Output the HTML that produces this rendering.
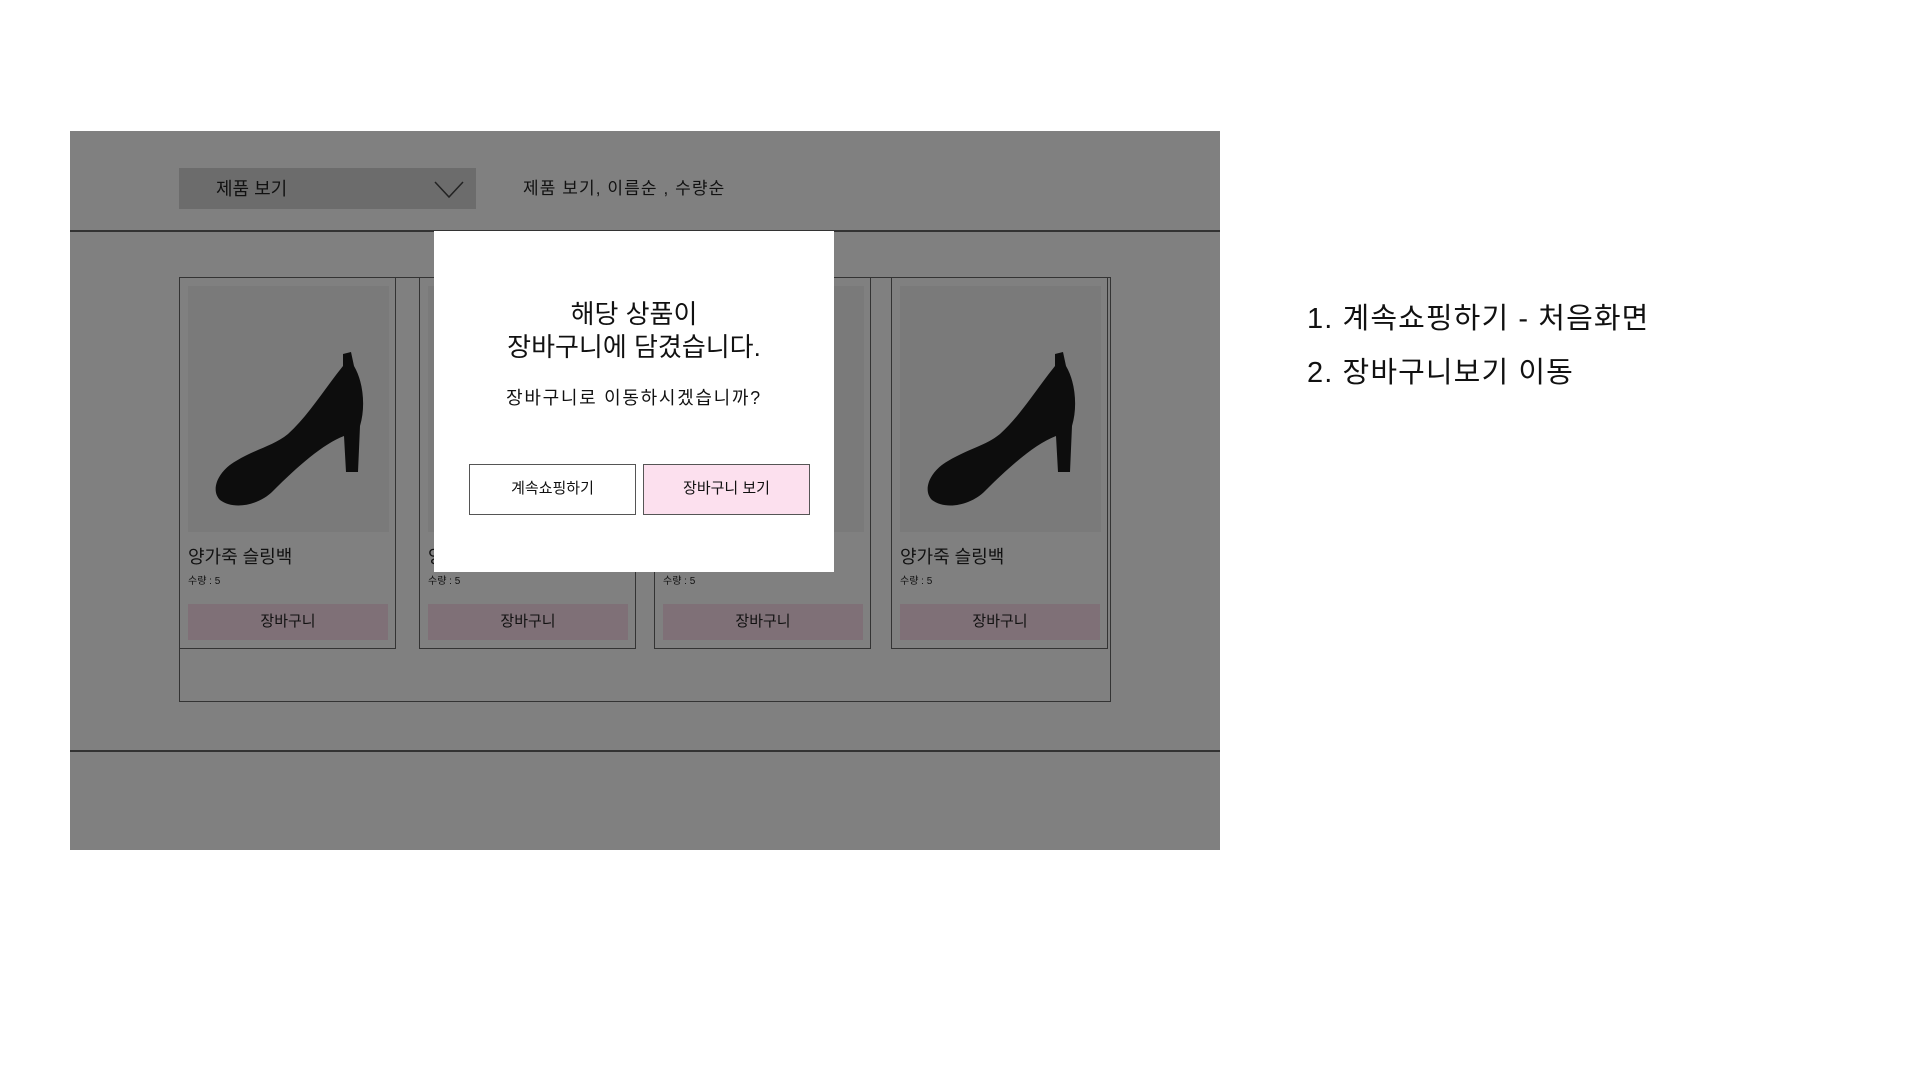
<!DOCTYPE html>
<html><head><meta charset="utf-8">
<style>
*{margin:0;padding:0;box-sizing:border-box}
body{width:1920px;height:1080px;background:#fff;position:relative;overflow:hidden;font-family:"Liberation Sans","Noto Sans CJK KR",sans-serif;color:#111}
.a{position:absolute}
.gray{left:70px;top:131px;width:1150px;height:719px;background:#808080}
.card{border:1.5px solid #333;width:217px;height:372px;top:277px}
.img{left:8px;top:8px;width:201px;height:246px;background:#7a7a7a}
.nm{left:8px;top:265px;font-size:18px;color:#111}
.qt{left:8px;top:294px;font-size:10px;color:#111}
.btn{left:8px;top:326px;width:200px;height:36px;background:#7f7077;font-size:15px;text-align:center;line-height:36px;color:#111}
.mb{top:464px;width:167px;height:51px;border:1.5px solid #555;font-size:15px;text-align:center;line-height:48px;color:#111}
</style></head><body>
<div class="a gray"></div>
<div class="a" style="left:179px;top:168px;width:297px;height:41px;background:#6c6c6c"></div>
<div class="a" style="left:216px;top:177px;font-size:18px;line-height:24px">제품 보기</div>
<svg class="a" style="left:434px;top:180px" width="30" height="20"><polyline points="1,2 15,17 29,2" fill="none" stroke="#222" stroke-width="1.5"/></svg>
<div class="a" style="left:523px;top:177px;font-size:17px;line-height:24px;letter-spacing:1.1px">제품 보기, 이름순 , 수량순</div>
<div class="a" style="left:70px;top:230px;width:1150px;height:1.5px;background:#333"></div>
<div class="a" style="left:179px;top:277px;width:932px;height:425px;border:1.5px solid #333"></div>
<div class="a" style="left:70px;top:750px;width:1150px;height:1.5px;background:#333"></div>

<div class="a card" style="left:179px"><div class="a img">
<svg width="201" height="246" viewBox="0 0 201 246"><path d="M155 68 L163 66 L166 80 C175 95 178 120 172 140 L170 186 L158 186 L156 150 C135 158 110 180 85 205 C70 220 45 224 32 214 C22 204 30 185 48 175 C70 162 85 160 100 148 C120 130 135 105 155 80 Z" fill="#0d0d0d"/></svg></div>
<div class="a nm">양가죽 슬링백</div><div class="a qt">수량 : 5</div><div class="a btn">장바구니</div></div>
<div class="a card" style="left:419px"><div class="a img"></div>
<div class="a nm">양가죽 슬링백</div><div class="a qt">수량 : 5</div><div class="a btn">장바구니</div></div>
<div class="a card" style="left:654px"><div class="a img"></div>
<div class="a nm">양가죽 슬링백</div><div class="a qt">수량 : 5</div><div class="a btn">장바구니</div></div>
<div class="a card" style="left:891px"><div class="a img">
<svg width="201" height="246" viewBox="0 0 201 246"><path d="M155 68 L163 66 L166 80 C175 95 178 120 172 140 L170 186 L158 186 L156 150 C135 158 110 180 85 205 C70 220 45 224 32 214 C22 204 30 185 48 175 C70 162 85 160 100 148 C120 130 135 105 155 80 Z" fill="#0d0d0d"/></svg></div>
<div class="a nm">양가죽 슬링백</div><div class="a qt">수량 : 5</div><div class="a btn">장바구니</div></div>

<div class="a" style="left:434px;top:231px;width:400px;height:341px;background:#fff"></div>
<div class="a" style="left:434px;top:298px;width:400px;text-align:center;font-size:26px;line-height:33px">해당 상품이<br>장바구니에 담겼습니다.</div>
<div class="a" style="left:434px;top:386px;width:400px;text-align:center;font-size:18px;line-height:24px;letter-spacing:1.7px">장바구니로 이동하시겠습니까?</div>
<div class="a mb" style="left:469px;background:#fff">계속쇼핑하기</div>
<div class="a mb" style="left:643px;background:#fce0ee">장바구니 보기</div>

<div class="a" style="left:1307px;top:300px;font-size:29px;line-height:38px;letter-spacing:1.1px">1. 계속쇼핑하기 - 처음화면</div>
<div class="a" style="left:1307px;top:354px;font-size:29px;line-height:38px;letter-spacing:1.1px">2. 장바구니보기 이동</div>
</body></html>
